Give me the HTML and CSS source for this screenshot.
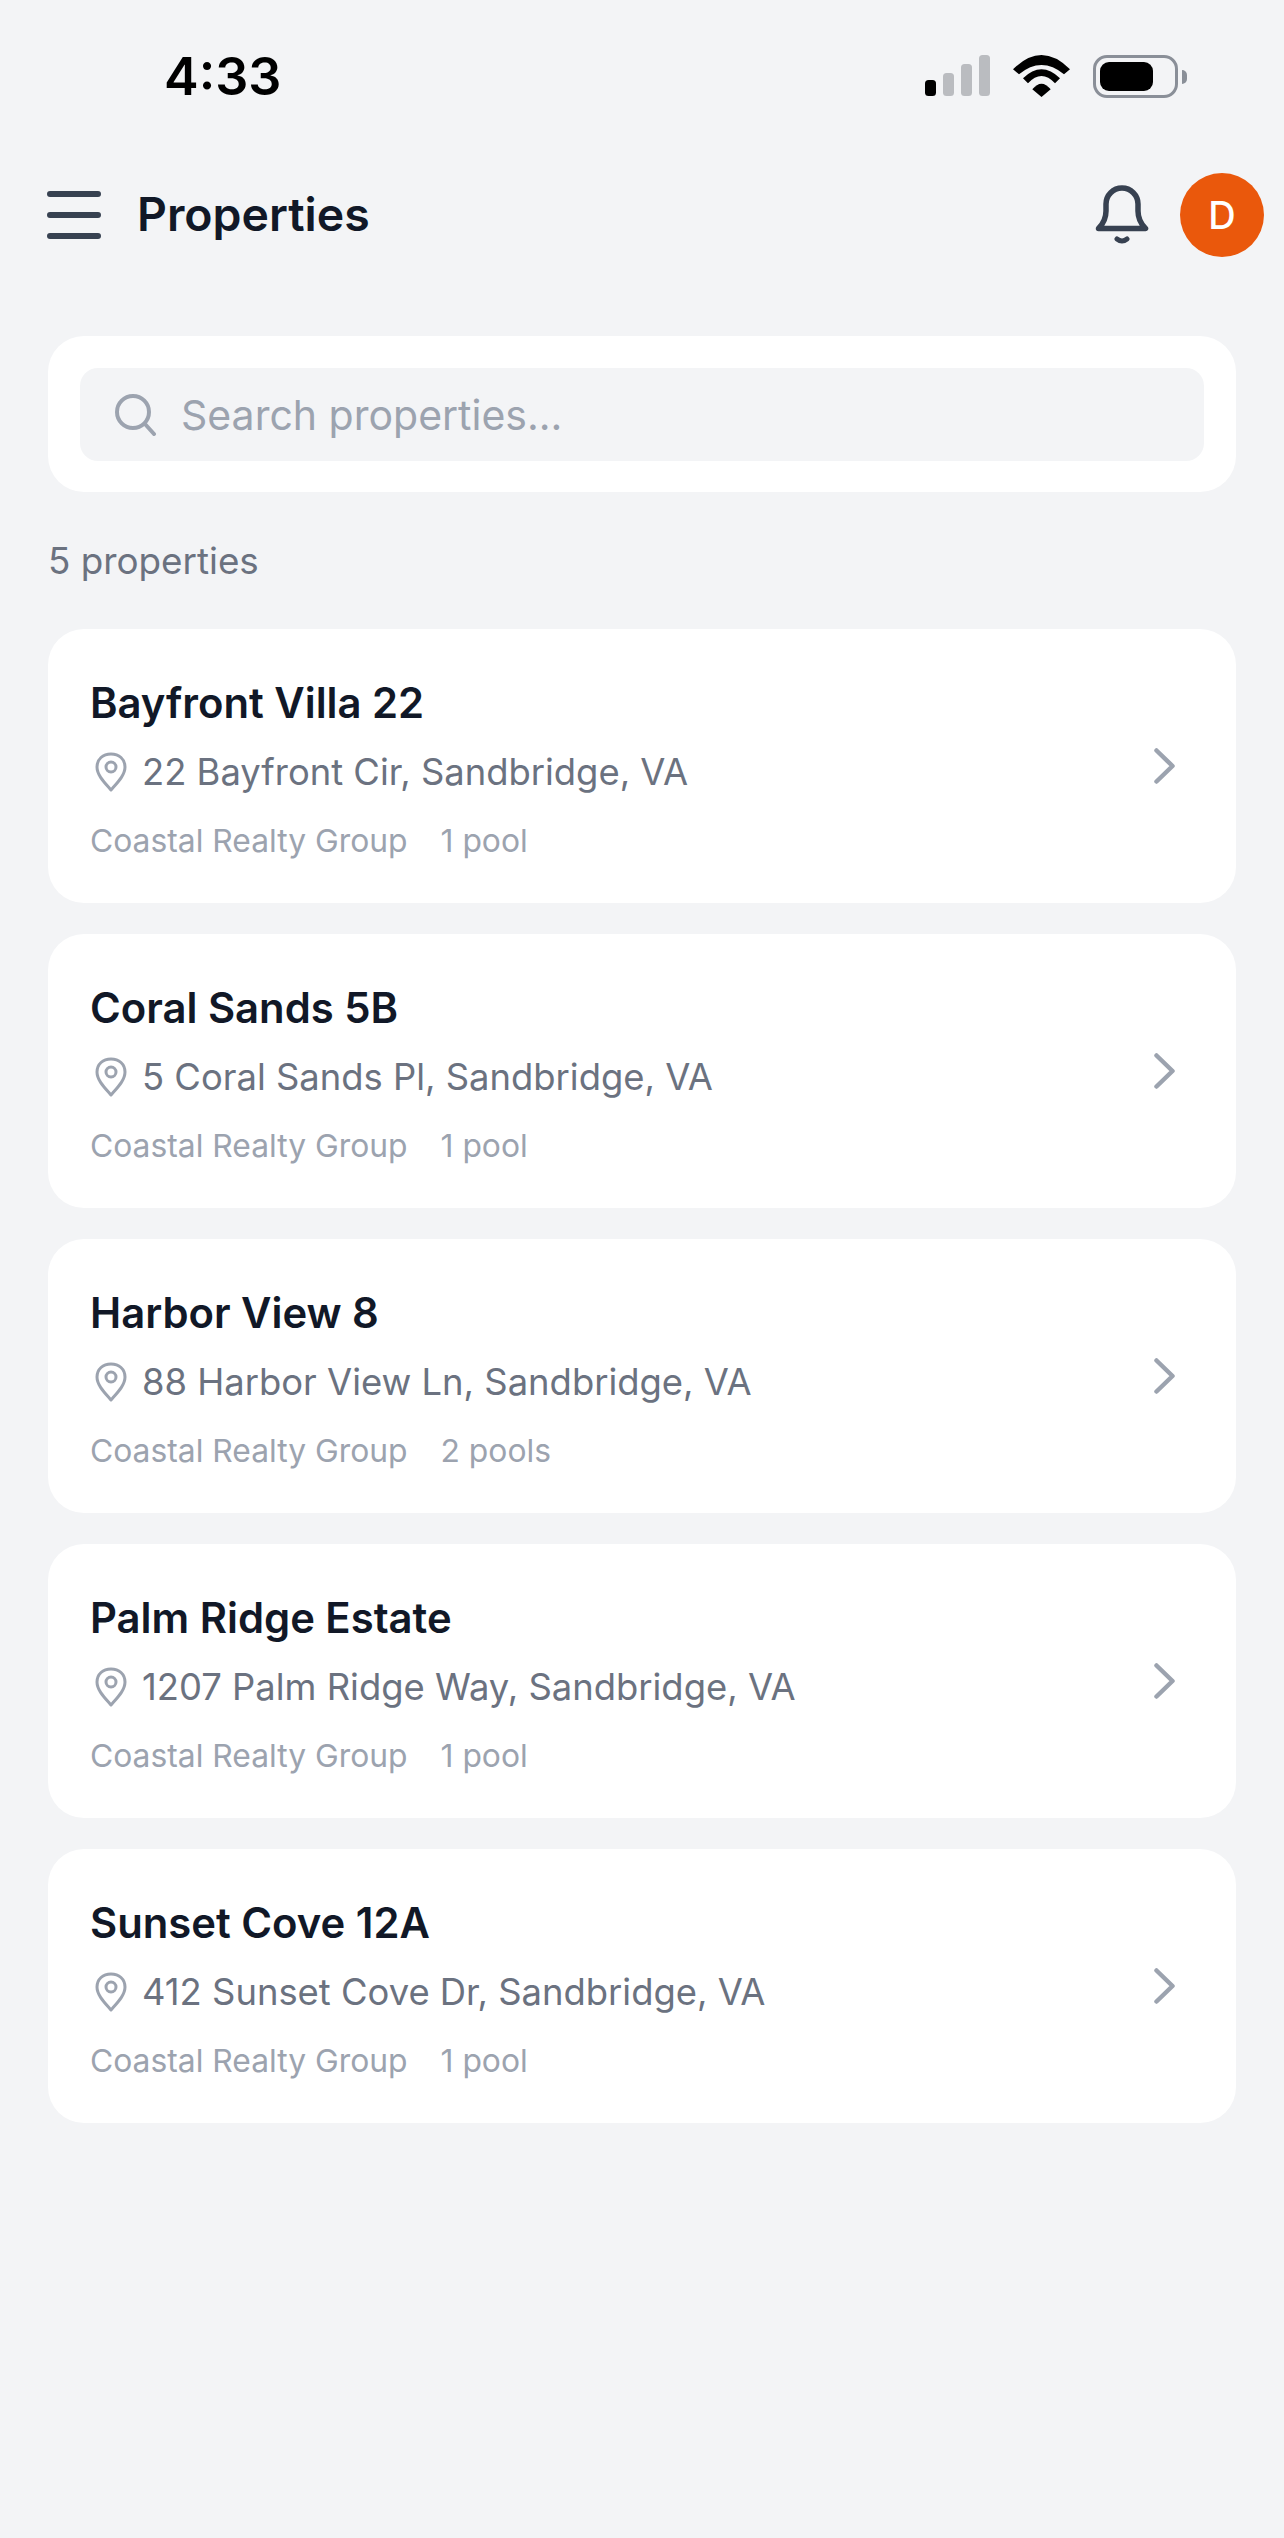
FILE: index.html
```html
<!DOCTYPE html>
<html lang="en">
<head>
    <meta charset="UTF-8">
    <meta name="viewport" content="width=device-width, initial-scale=1.0">
    <title>Properties</title>
    <link rel="stylesheet" href="styles.css">
</head>
<body>
    <div class="status-bar">
        <span class="time">4:33</span>
        <div class="status-icons">
            <svg class="signal" width="65" height="41" viewBox="0 0 65 41">
                <rect x="0" y="25" width="11" height="16" rx="3.5" fill="#000"/>
                <rect x="18" y="18" width="11" height="23" rx="3.5" fill="#babcc0"/>
                <rect x="36" y="9" width="11" height="32" rx="3.5" fill="#babcc0"/>
                <rect x="54" y="0" width="11" height="41" rx="3.5" fill="#babcc0"/>
            </svg>
            <svg class="wifi" width="57" height="42" viewBox="0 0 57 42">
                <path d="M0 14.300 Q28.500 -14.300 57 14.300 L51 19.300 Q28.500 0.700 6 19.300 Z" fill="#000"/>
                <path d="M10 23.300 Q28.500 5.300 47 23.300 L42 28.300 Q28.500 13.700 15 28.300 Z" fill="#000"/>
                <path d="M19.300 34.300 Q28.500 23 37.700 34.300 L28.500 42 Z" fill="#000"/>
            </svg>
            <div class="battery">
                <div class="battery-body"><div class="battery-level"></div></div>
                <div class="battery-nub"></div>
            </div>
        </div>
    </div>

    <header class="top-bar">
        <svg class="menu-icon" width="54" height="48" viewBox="0 0 54 48">
            <path d="M3 3 H51 M3 24 H51 M3 45 H51" fill="none" stroke="#374151" stroke-width="6" stroke-linecap="round"/>
        </svg>
        <h1>Properties</h1>
        <svg class="bell-icon" width="54" height="60" viewBox="0 0 54 60">
            <path d="M3.500 43.500 Q11 36 11 26 L11 19 A16 16 0 0 1 43 19 L43 26 Q43 36 50.500 43.500 Z" fill="none" stroke="#374151" stroke-width="5.500" stroke-linejoin="round"/>
            <path d="M22 54 Q27 58 32 54" fill="none" stroke="#374151" stroke-width="5" stroke-linecap="round"/>
        </svg>
        <div class="avatar">D</div>
    </header>

    <main class="content">
        <div class="search-card">
            <div class="search-box">
                <svg width="42" height="42" viewBox="0 0 42 42">
                    <circle cx="18" cy="18" r="16" fill="none" stroke="#9ca3af" stroke-width="4"/>
                    <path d="M30 30 L39 40" fill="none" stroke="#9ca3af" stroke-width="4" stroke-linecap="round"/>
                </svg>
                <span>Search properties...</span>
            </div>
        </div>

        <p class="count">5 properties</p>

        <div class="property-list">
            <div class="property-card">
                <div class="property-info">
                    <h2>Bayfront Villa 22</h2>
                    <div class="address">
                        <svg class="pin" width="32" height="40" viewBox="0 0 32 40">
                            <path d="M16 38 C9 30 2 23 2 15 C2 7 8 2 16 2 C24 2 30 7 30 15 C30 23 23 30 16 38 Z" fill="none" stroke="#9ca3af" stroke-width="3" stroke-linejoin="round"/>
                            <circle cx="16" cy="15" r="5" fill="none" stroke="#9ca3af" stroke-width="3"/>
                        </svg>
                        <span>22 Bayfront Cir, Sandbridge, VA</span>
                    </div>
                    <div class="meta"><span>Coastal Realty Group</span><span>1 pool</span></div>
                </div>
                <svg class="chevron" width="22" height="36" viewBox="0 0 22 36">
                    <path d="M2.500 2.500 L18.500 18 L2.500 33.500" fill="none" stroke="#9ca3af" stroke-width="4.500" stroke-linecap="round" stroke-linejoin="round"/>
                </svg>
            </div>
            <div class="property-card">
                <div class="property-info">
                    <h2>Coral Sands 5B</h2>
                    <div class="address">
                        <svg class="pin" width="32" height="40" viewBox="0 0 32 40">
                            <path d="M16 38 C9 30 2 23 2 15 C2 7 8 2 16 2 C24 2 30 7 30 15 C30 23 23 30 16 38 Z" fill="none" stroke="#9ca3af" stroke-width="3" stroke-linejoin="round"/>
                            <circle cx="16" cy="15" r="5" fill="none" stroke="#9ca3af" stroke-width="3"/>
                        </svg>
                        <span>5 Coral Sands Pl, Sandbridge, VA</span>
                    </div>
                    <div class="meta"><span>Coastal Realty Group</span><span>1 pool</span></div>
                </div>
                <svg class="chevron" width="22" height="36" viewBox="0 0 22 36">
                    <path d="M2.500 2.500 L18.500 18 L2.500 33.500" fill="none" stroke="#9ca3af" stroke-width="4.500" stroke-linecap="round" stroke-linejoin="round"/>
                </svg>
            </div>
            <div class="property-card">
                <div class="property-info">
                    <h2>Harbor View 8</h2>
                    <div class="address">
                        <svg class="pin" width="32" height="40" viewBox="0 0 32 40">
                            <path d="M16 38 C9 30 2 23 2 15 C2 7 8 2 16 2 C24 2 30 7 30 15 C30 23 23 30 16 38 Z" fill="none" stroke="#9ca3af" stroke-width="3" stroke-linejoin="round"/>
                            <circle cx="16" cy="15" r="5" fill="none" stroke="#9ca3af" stroke-width="3"/>
                        </svg>
                        <span>88 Harbor View Ln, Sandbridge, VA</span>
                    </div>
                    <div class="meta"><span>Coastal Realty Group</span><span>2 pools</span></div>
                </div>
                <svg class="chevron" width="22" height="36" viewBox="0 0 22 36">
                    <path d="M2.500 2.500 L18.500 18 L2.500 33.500" fill="none" stroke="#9ca3af" stroke-width="4.500" stroke-linecap="round" stroke-linejoin="round"/>
                </svg>
            </div>
            <div class="property-card">
                <div class="property-info">
                    <h2>Palm Ridge Estate</h2>
                    <div class="address">
                        <svg class="pin" width="32" height="40" viewBox="0 0 32 40">
                            <path d="M16 38 C9 30 2 23 2 15 C2 7 8 2 16 2 C24 2 30 7 30 15 C30 23 23 30 16 38 Z" fill="none" stroke="#9ca3af" stroke-width="3" stroke-linejoin="round"/>
                            <circle cx="16" cy="15" r="5" fill="none" stroke="#9ca3af" stroke-width="3"/>
                        </svg>
                        <span>1207 Palm Ridge Way, Sandbridge, VA</span>
                    </div>
                    <div class="meta"><span>Coastal Realty Group</span><span>1 pool</span></div>
                </div>
                <svg class="chevron" width="22" height="36" viewBox="0 0 22 36">
                    <path d="M2.500 2.500 L18.500 18 L2.500 33.500" fill="none" stroke="#9ca3af" stroke-width="4.500" stroke-linecap="round" stroke-linejoin="round"/>
                </svg>
            </div>
            <div class="property-card">
                <div class="property-info">
                    <h2>Sunset Cove 12A</h2>
                    <div class="address">
                        <svg class="pin" width="32" height="40" viewBox="0 0 32 40">
                            <path d="M16 38 C9 30 2 23 2 15 C2 7 8 2 16 2 C24 2 30 7 30 15 C30 23 23 30 16 38 Z" fill="none" stroke="#9ca3af" stroke-width="3" stroke-linejoin="round"/>
                            <circle cx="16" cy="15" r="5" fill="none" stroke="#9ca3af" stroke-width="3"/>
                        </svg>
                        <span>412 Sunset Cove Dr, Sandbridge, VA</span>
                    </div>
                    <div class="meta"><span>Coastal Realty Group</span><span>1 pool</span></div>
                </div>
                <svg class="chevron" width="22" height="36" viewBox="0 0 22 36">
                    <path d="M2.500 2.500 L18.500 18 L2.500 33.500" fill="none" stroke="#9ca3af" stroke-width="4.500" stroke-linecap="round" stroke-linejoin="round"/>
                </svg>
            </div>
        </div>
    </main>
</body>
</html>
```

FILE: styles.css
```css
* {
    box-sizing: border-box;
}
html, body {
    margin: 0;
    padding: 0;
}
body {
    width: 1284px;
    height: 2538px;
    overflow: hidden;
    background-color: #f3f4f6;
    font-family: Inter, "Noto Sans", sans-serif;
}

/* status bar */
.status-bar {
    display: flex;
    align-items: flex-start;
    justify-content: space-between;
    height: 150px;
    padding: 48px 97px 0 164px;
}
.time {
    font-size: 52px;
    line-height: 58px;
    font-weight: 600;
    color: #000;
}
.status-icons {
    display: flex;
    align-items: flex-start;
    gap: 23px;
    padding-top: 7px;
}
.battery {
    display: flex;
    align-items: center;
    gap: 4px;
}
.battery-body {
    width: 85px;
    height: 43px;
    padding: 4px;
    border: 3px solid #8a8f98;
    border-radius: 14px;
}
.battery-level {
    width: 53px;
    height: 29px;
    background: #000;
    border-radius: 9px;
}
.battery-nub {
    width: 5px;
    height: 14px;
    background: #8a8f98;
    border-radius: 0 7px 7px 0;
}

/* top bar */
.top-bar {
    display: flex;
    align-items: center;
    height: 130px;
    padding: 0 20px 0 47px;
}
.top-bar h1 {
    flex: 1;
    margin: 0 0 3px 36px;
    font-size: 46.400px;
    font-weight: 560;
    color: #111827;
}
.bell-icon {
    margin-right: 31px;
}
.avatar {
    display: flex;
    align-items: center;
    justify-content: center;
    width: 84px;
    height: 84px;
    border-radius: 50%;
    background-color: #ea580c;
    color: #fff;
    font-size: 38px;
    font-weight: 500;
}

/* main content */
.content {
    padding: 56px 48px 0;
}
.search-card {
    padding: 32px 32px 31px;
    background: #fff;
    border-radius: 36px;
}
.search-box {
    display: flex;
    align-items: center;
    gap: 24px;
    height: 93px;
    padding: 0 35px;
    background-color: #f3f4f6;
    border-radius: 18px;
    color: #9ca3af;
    font-size: 41px;
}
.count {
    margin: 46px 0 45px;
    font-size: 36.800px;
    line-height: 46px;
    color: #6b7280;
}
.property-list {
    display: flex;
    flex-direction: column;
    gap: 31px;
}
.property-card {
    display: flex;
    align-items: center;
    justify-content: space-between;
    height: 274px;
    padding: 0 60px 0 42px;
    background: #fff;
    border-radius: 36px;
}
.property-info {
    padding-top: 7px;
}
.property-card h2 {
    margin: 0;
    font-size: 41.800px;
    line-height: 50px;
    font-weight: 560;
    color: #111827;
}
.address {
    display: flex;
    align-items: center;
    gap: 15px;
    margin-top: 20px;
    font-size: 36.400px;
    line-height: 48px;
    color: #6b7280;
}
.pin {
    margin-left: 5px;
}
.meta {
    display: flex;
    gap: 33px;
    margin-top: 25px;
    font-size: 31.800px;
    line-height: 40px;
    color: #9ca3af;
}
```
